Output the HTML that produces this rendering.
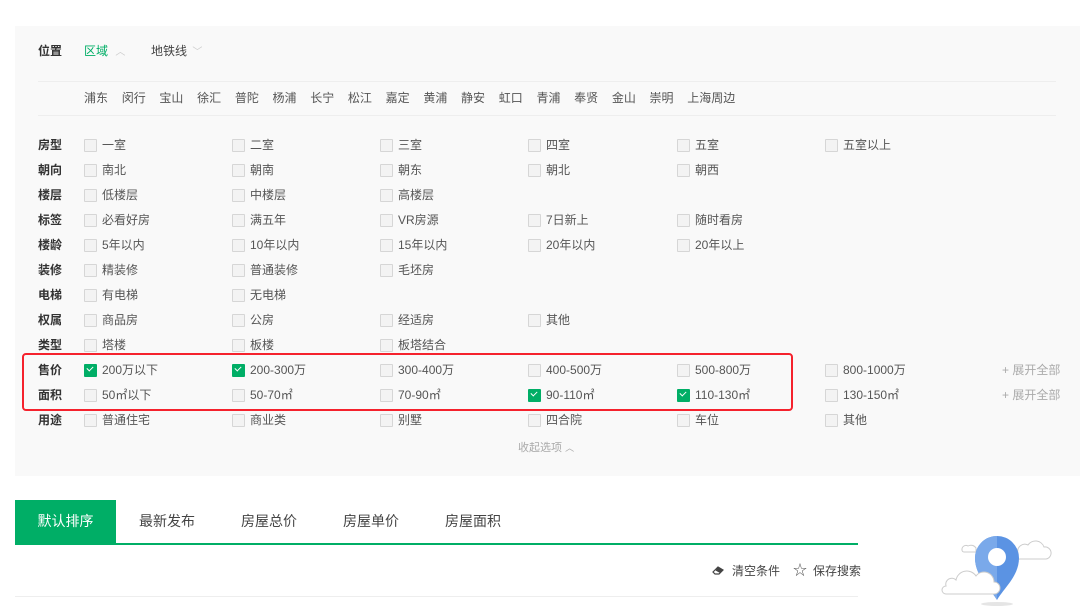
<!DOCTYPE html>
<html><head><meta charset="utf-8"><style>
*{margin:0;padding:0;box-sizing:border-box}
body{width:1080px;height:606px;background:#fff;position:relative;overflow:hidden;font-family:"Liberation Sans","Noto Sans CJK SC",sans-serif;font-size:12px;color:#333}
#p{position:absolute;left:15px;top:26px;width:1065px;height:450px;background:#f9f9f9}
.a{position:absolute;white-space:nowrap;line-height:16px}
.r{position:absolute;left:0;width:1080px;height:16px}
.l{position:absolute;left:38px;top:0;font-weight:bold;color:#333;line-height:16px}
.i{position:absolute;top:0;line-height:16px;color:#555;white-space:nowrap}
.i:before{content:"";position:absolute;left:-18px;top:2px;width:11px;height:11px;border:1px solid #d6d6d6;background:#f3f3f3;border-radius:1px}
.k:before{background:#00ae66;border-color:#00ae66}
.k:after{content:"";position:absolute;left:-15px;top:4px;width:5px;height:3px;border-left:1.5px solid #fff;border-bottom:1.5px solid #fff;transform:rotate(-45deg)}
.c1{left:102px}.c2{left:250px}.c3{left:398px}.c4{left:546px}.c5{left:695px}.c6{left:843px}
.e{position:absolute;left:1002px;top:0;color:#aaa;line-height:16px}
.d span{margin-right:13.7px}
</style></head><body>
<div id="p"></div>
<div class="a" style="left:38px;top:43px;font-weight:bold">位置</div>
<div class="a" style="left:84px;top:43px;color:#00ae66">区域 <span style="color:#ccc;font-size:10px;margin-left:4px">︿</span></div>
<div class="a" style="left:151px;top:43px;color:#444">地铁线 <span style="color:#ccc;font-size:10px;margin-left:2px">﹀</span></div>
<div style="position:absolute;left:38px;top:81px;width:1018px;height:1px;background:#eee"></div>
<div class="a d" style="left:84px;top:90px;color:#555"><span>浦东</span><span>闵行</span><span>宝山</span><span>徐汇</span><span>普陀</span><span>杨浦</span><span>长宁</span><span>松江</span><span>嘉定</span><span>黄浦</span><span>静安</span><span>虹口</span><span>青浦</span><span>奉贤</span><span>金山</span><span>崇明</span><span>上海周边</span></div>
<div style="position:absolute;left:38px;top:115px;width:1018px;height:1px;background:#eee"></div>

<div class="r" style="top:137px"><span class="l">房型</span><span class="i c1">一室</span><span class="i c2">二室</span><span class="i c3">三室</span><span class="i c4">四室</span><span class="i c5">五室</span><span class="i c6">五室以上</span></div>
<div class="r" style="top:162px"><span class="l">朝向</span><span class="i c1">南北</span><span class="i c2">朝南</span><span class="i c3">朝东</span><span class="i c4">朝北</span><span class="i c5">朝西</span></div>
<div class="r" style="top:187px"><span class="l">楼层</span><span class="i c1">低楼层</span><span class="i c2">中楼层</span><span class="i c3">高楼层</span></div>
<div class="r" style="top:212px"><span class="l">标签</span><span class="i c1">必看好房</span><span class="i c2">满五年</span><span class="i c3">VR房源</span><span class="i c4">7日新上</span><span class="i c5">随时看房</span></div>
<div class="r" style="top:237px"><span class="l">楼龄</span><span class="i c1">5年以内</span><span class="i c2">10年以内</span><span class="i c3">15年以内</span><span class="i c4">20年以内</span><span class="i c5">20年以上</span></div>
<div class="r" style="top:262px"><span class="l">装修</span><span class="i c1">精装修</span><span class="i c2">普通装修</span><span class="i c3">毛坯房</span></div>
<div class="r" style="top:287px"><span class="l">电梯</span><span class="i c1">有电梯</span><span class="i c2">无电梯</span></div>
<div class="r" style="top:312px"><span class="l">权属</span><span class="i c1">商品房</span><span class="i c2">公房</span><span class="i c3">经适房</span><span class="i c4">其他</span></div>
<div class="r" style="top:337px"><span class="l">类型</span><span class="i c1">塔楼</span><span class="i c2">板楼</span><span class="i c3">板塔结合</span></div>
<div class="r" style="top:362px"><span class="l">售价</span><span class="i c1 k">200万以下</span><span class="i c2 k">200-300万</span><span class="i c3">300-400万</span><span class="i c4">400-500万</span><span class="i c5">500-800万</span><span class="i c6">800-1000万</span><span class="e">+ 展开全部</span></div>
<div class="r" style="top:387px"><span class="l">面积</span><span class="i c1">50㎡以下</span><span class="i c2">50-70㎡</span><span class="i c3">70-90㎡</span><span class="i c4 k">90-110㎡</span><span class="i c5 k">110-130㎡</span><span class="i c6">130-150㎡</span><span class="e">+ 展开全部</span></div>
<div class="r" style="top:412px"><span class="l">用途</span><span class="i c1">普通住宅</span><span class="i c2">商业类</span><span class="i c3">别墅</span><span class="i c4">四合院</span><span class="i c5">车位</span><span class="i c6">其他</span></div>
<div class="a" style="left:518px;top:440px;color:#aaa;font-size:11px">收起选项 <span style="font-size:9px">︿</span></div>

<div style="position:absolute;left:22px;top:353px;width:771px;height:58px;border:2px solid #f5222d;border-radius:4px"></div>

<div style="position:absolute;left:15px;top:500px;width:101px;height:43px;background:#00ae66;color:#fff;font-size:14px;line-height:43px;text-align:center">默认排序</div>
<div class="a" style="left:139px;top:513px;font-size:14px;color:#444">最新发布</div>
<div class="a" style="left:241px;top:513px;font-size:14px;color:#444">房屋总价</div>
<div class="a" style="left:343px;top:513px;font-size:14px;color:#444">房屋单价</div>
<div class="a" style="left:445px;top:513px;font-size:14px;color:#444">房屋面积</div>
<div style="position:absolute;left:15px;top:543px;width:843px;height:2px;background:#00ae66"></div>
<svg style="position:absolute;left:711px;top:563px" width="14" height="14" viewBox="0 0 14 14"><path d="M2 9 L7 4 L12 7 L8 11 L4 11 Z" fill="#fff" stroke="#444" stroke-width="1.2"/><path d="M7 4 L12 7 L9 10 L4.5 7.5Z" fill="#444"/></svg>
<div class="a" style="left:732px;top:563px;color:#444">清空条件</div>
<div class="a" style="left:793px;top:562px;color:#555;font-size:14px">☆</div>
<div class="a" style="left:813px;top:563px;color:#444">保存搜索</div>
<div style="position:absolute;left:15px;top:596px;width:843px;height:1px;background:#eee"></div>

<svg style="position:absolute;left:940px;top:534px" width="140" height="72" viewBox="0 0 140 72">
<ellipse cx="57" cy="70" rx="16" ry="2" fill="#e5e5e5"/>
<path d="M80 25 h26 a6 6 0 0 0 -2 -12 a9 9 0 0 0 -16 -2 a7 7 0 0 0 -10 8 a3 3 0 0 0 2 6Z" fill="#fff" stroke="#ccc" stroke-width="1"/>
<path d="M22 16 a4 4 0 0 1 6 -4 a6 6 0 0 1 8 2 v4 h-12 a2 2 0 0 1 -2 -2Z" fill="#fff" stroke="#ccc" stroke-width="1"/>
<path d="M57 66 C50 54 35 42 35 24 A22 22 0 0 1 79 24 C79 42 64 54 57 66Z" fill="#5b93e3"/>
<path d="M57 66 C50 54 35 42 35 24 A22 22 0 0 1 57 2Z" fill="#7aa9ea"/>
<circle cx="57" cy="23" r="9" fill="#fff"/>
<path d="M6 60 h48 a6 6 0 0 0 0 -12 a10 10 0 0 0 -18 -6 a11 11 0 0 0 -20 4 a6 6 0 0 0 -10 6 a4 4 0 0 0 0 8Z" fill="#fff" stroke="#ccc" stroke-width="1"/>
</svg>
</body></html>
